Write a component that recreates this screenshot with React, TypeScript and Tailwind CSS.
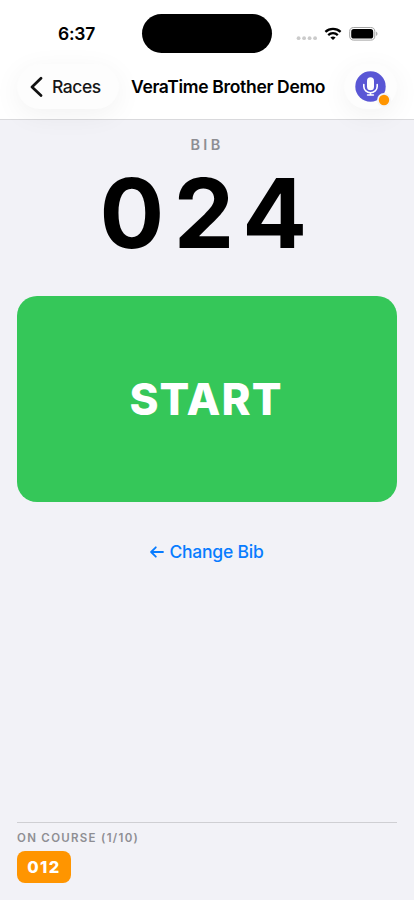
function StatusBar() {
  return (
    <div className="relative h-[54px] shrink-0">
      <div className="absolute left-[58px] top-[22px] text-[17.5px] leading-6 font-semibold tracking-[-0.2px]">6:37</div>
      <div className="absolute left-[142px] top-[14px] h-[38.5px] w-[130px] rounded-full bg-black" />
      <svg className="absolute left-[296px] top-[24px]" width="84" height="20" viewBox="0 0 84 20">
        <g fill="#cbcbcb">
          <circle cx="2.6" cy="14.2" r="1.9" />
          <circle cx="8.1" cy="14.2" r="1.9" />
          <circle cx="13.6" cy="14.2" r="1.9" />
          <circle cx="19.1" cy="14.2" r="1.9" />
        </g>
        <g fill="none" stroke="#000" strokeWidth="2.3">
          <path d="M29.4 7.9a11.2 11.2 0 0 1 15.2 0" />
          <path d="M32.2 11.1a7 7 0 0 1 9.6 0" />
        </g>
        <path d="M34.4 13.6a4 4 0 0 1 5.2 0L37 16z" fill="#000" />
        <rect x="53.7" y="3.5" width="25.1" height="12.6" rx="4.1" fill="none" stroke="#a3a3a3" strokeWidth="1" />
        <rect x="55.2" y="5" width="22" height="9.6" rx="2.7" fill="#000" />
        <path d="M80.2 7.6c1.7.7 1.7 3.7 0 4.4z" fill="#a3a3a3" />
      </svg>
    </div>
  );
}

function NavBar() {
  return (
    <div className="flex h-[66px] shrink-0 items-start pl-[17px] pr-[17px] pt-[10px]">
      <button className="flex h-[45px] w-[102px] shrink-0 items-center rounded-full bg-[#fdfdfd] pl-[13px] shadow-[0_6px_28px_rgba(0,0,0,0.055)]">
        <svg width="13" height="21" viewBox="0 0 13 21" fill="none" stroke="#111" strokeWidth="2.7" strokeLinecap="round" strokeLinejoin="round">
          <path d="M11 2.2 2 11 11 19.6" />
        </svg>
        <span className="ml-[9px] pt-[2px] text-[17.5px] font-medium tracking-[-0.45px] text-[#161616]">Races</span>
      </button>
      <h1 className="ml-[12px] w-[196px] shrink-0 whitespace-nowrap text-[17.5px] leading-[45px] font-semibold tracking-[-0.33px]">
        VeraTime Brother Demo
      </h1>
      <button className="relative ml-auto h-[45px] w-[53px] shrink-0 rounded-full bg-[#fdfdfd] shadow-[0_6px_28px_rgba(0,0,0,0.055)]">
        <svg width="53" height="45" viewBox="0 0 53 45">
          <circle cx="26.5" cy="22.5" r="15.2" fill="#5956d5" />
          <rect x="23" y="13.2" width="7" height="13" rx="3.5" fill="#fff" />
          <path d="M19.8 20.6v1.9a6.7 6.2 0 0 0 13.4 0v-1.9M26.5 28.7v2.3M23.6 31h5.8" fill="none" stroke="#fff" strokeWidth="1.6" strokeLinecap="round" />
          <circle cx="40" cy="36" r="6.9" fill="#f4f4f6" />
          <circle cx="40" cy="36" r="5.2" fill="#ff9500" />
        </svg>
      </button>
    </div>
  );
}

export default function App() {
  return (
    <div className="flex h-[900px] w-[414px] flex-col overflow-hidden bg-[#f2f2f7] font-['Inter','Liberation_Sans',sans-serif] text-black">
      <header className="flex h-[120px] shrink-0 flex-col border-b border-[#d9d9dc] bg-white">
        <StatusBar />
        <NavBar />
      </header>
      <main className="flex min-h-0 flex-1 flex-col px-[17px]">
        <div className="mt-[15px] text-center text-[14.5px] leading-5 font-semibold tracking-[3.3px] text-[#8e8e93]">BIB</div>
        <div className="mt-[9px] whitespace-nowrap pl-[2px] text-center text-[96px] leading-[98px] font-bold tracking-[9.5px]">024</div>
        <button className="mt-[34px] h-[206px] shrink-0 rounded-[20px] bg-[#35c759] pr-[2px] text-[44px] font-extrabold tracking-[1.1px] text-white">START</button>
        <button className="mt-[38px] flex h-6 shrink-0 items-center justify-center text-[17.5px] font-medium tracking-[-0.22px] text-[#087cff]">
          <svg className="mr-[5px]" width="14" height="12" viewBox="0 0 14 12" fill="none" stroke="currentColor" strokeWidth="1.8" strokeLinecap="round" strokeLinejoin="round">
            <path d="M13 6H1.2M5.8 1.3 1.1 6l4.7 4.7" />
          </svg>
          Change Bib
        </button>
        <section className="mt-auto h-[78px] shrink-0 border-t border-[#cfcfd3]">
          <div className="mt-[7px] text-[11.5px] leading-4 font-semibold tracking-[1.3px] text-[#8e8e93]">ON COURSE (1/10)</div>
          <div className="mt-[5px] flex h-8 w-[54px] items-center justify-center rounded-lg bg-[#ff9500] text-[16.5px] font-extrabold tracking-[1.4px] text-white">012</div>
        </section>
      </main>
    </div>
  );
}
